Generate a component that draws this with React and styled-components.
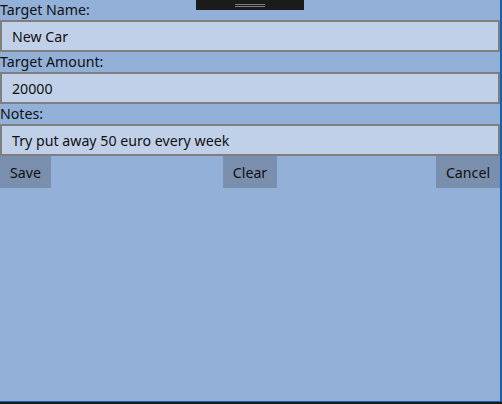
import React from 'react';
import styled, { createGlobalStyle } from 'styled-components';

const GlobalStyle = createGlobalStyle`
  html, body {
    margin: 0;
    padding: 0;
    background: #1b1b1b;
  }
  body {
    font-family: 'Noto Sans', 'Open Sans', sans-serif;
  }
`;

const Window = styled.div`
  position: relative;
  width: 500px;
  height: 401px;
  background: #93b0d8;
  border-right: 2px solid #1d5ea9;
  border-bottom: 1px solid #1d5ea9;
`;

const Grip = styled.div`
  position: absolute;
  top: 0;
  left: 196px;
  width: 108px;
  height: 10px;
  background: #1b1b1b;
  &::before,
  &::after {
    content: '';
    position: absolute;
    left: 39px;
    width: 30px;
    height: 1px;
    background: #7d7d7d;
  }
  &::before {
    top: 4px;
  }
  &::after {
    top: 6px;
  }
`;

const Form = styled.div`
  display: flex;
  flex-direction: column;
`;

const Label = styled.div`
  height: 20px;
  line-height: 20px;
  font-size: 14.2px;
  color: #101010;
`;

const Field = styled.div`
  box-sizing: border-box;
  height: 32px;
  border: 2px solid #7f7f7f;
  background: #c0d0e8;
  padding: 0 10px;
  display: flex;
  align-items: center;
  font-size: 14.2px;
  color: #101010;
`;

const Buttons = styled.div`
  display: grid;
  grid-template-columns: 1fr auto 1fr;
`;

const Button = styled.div`
  box-sizing: border-box;
  height: 32px;
  width: ${(p) => p.$w}px;
  justify-self: ${(p) => p.$align};
  display: flex;
  align-items: center;
  justify-content: center;
  background: #7a8fae;
  font-size: 14.2px;
  color: #101010;
`;

const App = () => {
  return (
    <>
      <GlobalStyle />
      <Window>
        <Grip />
        <Form>
          <Label>Target Name:</Label>
          <Field>New Car</Field>
          <Label>Target Amount:</Label>
          <Field>20000</Field>
          <Label>Notes:</Label>
          <Field>Try put away 50 euro every week</Field>
          <Buttons>
            <Button $w={51} $align="start">Save</Button>
            <Button $w={54} $align="center">Clear</Button>
            <Button $w={64} $align="end">Cancel</Button>
          </Buttons>
        </Form>
      </Window>
    </>
  );
};

export default App;
